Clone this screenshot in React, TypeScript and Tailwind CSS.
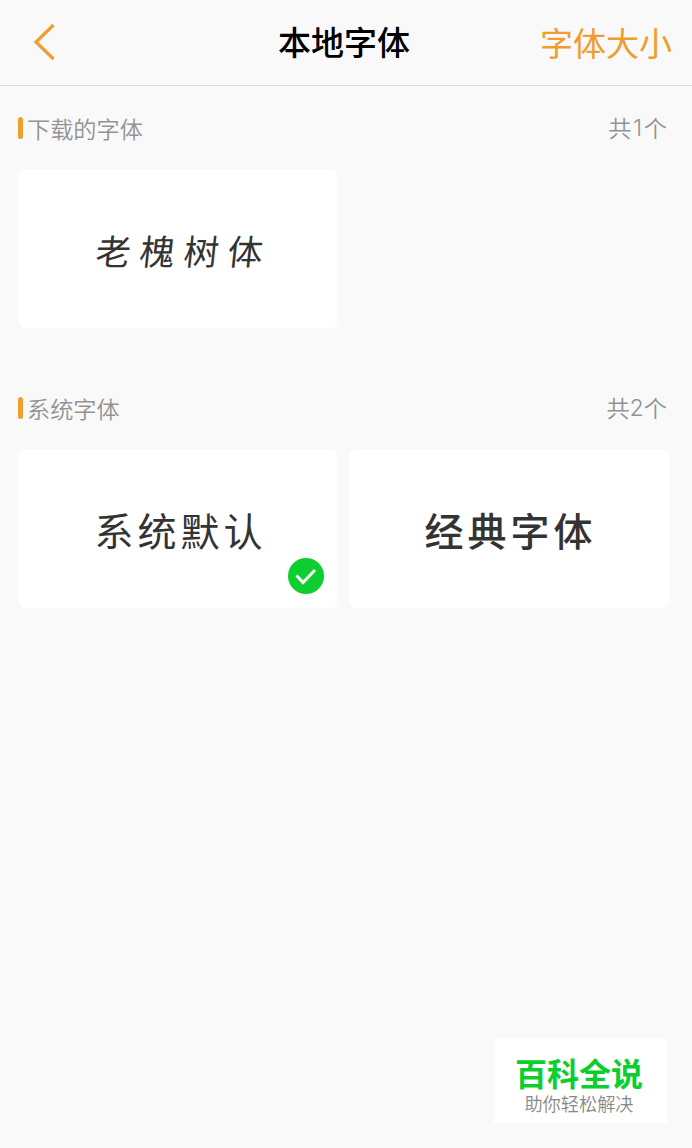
import React from "react";

function SectionHead({ title, total }: { title: string; total: number }) {
  return (
    <div className="flex h-[30px] items-center justify-between pl-[18px] pr-[25px] text-[23.200px] font-[350] leading-[28px] text-[#939393]">
      <div className="flex items-center gap-1">
        <span className="h-[22px] w-[5px] rounded-sm bg-[#ef9d2d]" />
        <span className="-mt-px">{title}</span>
      </div>
      <span className="-mt-[2px] flex">
        共
        <span className="mt-px min-w-[12.500px] text-center font-['Inter',sans-serif]">{total}</span>
        个
      </span>
    </div>
  );
}

export default function App() {
  return (
    <div className="relative flex h-[1148px] w-[692px] flex-col overflow-hidden bg-[#f9f9f9] font-['Noto_Sans_CJK_SC',sans-serif]">
      <header className="grid h-[86px] grid-cols-[1fr_132px_1fr] items-center border-b border-[#dcdcdc] pr-5 pl-4">
        <svg className="mb-[2px] ml-[16px] h-[38px] w-[24px]" viewBox="0 0 24 38" fill="none" stroke="#ef9d2d" strokeWidth="3.200">
          <path d="M21.500 2L4 19L21.500 36" />
        </svg>
        <h1 className="mb-[3px] text-center text-[33px] font-medium leading-[48px] whitespace-nowrap text-black">本地字体</h1>
        <button className="mb-[2px] text-right text-[33px] leading-[48px] whitespace-nowrap text-[#ef9d2d]">字体大小</button>
      </header>
      <section className="pt-[27px]">
        <SectionHead title="下载的字体" total={1} />
        <div className="mt-[26px] ml-[18px] flex h-[159px] w-[320px] items-center justify-center rounded-lg bg-white">
          <span className="mt-[3px] ml-[12px] -skew-x-6 text-[35px] tracking-[9px] text-[#333]">老槐树体</span>
        </div>
      </section>
      <section className="pt-[65px]">
        <SectionHead title="系统字体" total={2} />
        <div className="mt-[26px] flex gap-[11px] px-[18px]">
          <div className="relative flex h-[159px] w-[320px] items-center justify-center rounded-lg bg-white">
            <span className="mt-px ml-[5px] text-[39px] tracking-[4px] text-[#333]">系统默认</span>
            <svg className="absolute right-[14px] bottom-[14px] h-9 w-9" viewBox="0 0 36 36" fill="none">
              <circle cx="18" cy="18" r="18" fill="#0cce2f" />
              <path d="M8.500 17.500L15 24.500L27 12" stroke="white" strokeWidth="3" />
            </svg>
          </div>
          <div className="flex h-[159px] w-[320px] items-center justify-center rounded-lg bg-white">
            <span className="mt-px ml-[3px] text-[39px] font-medium tracking-[4px] text-[#333]">经典字体</span>
          </div>
        </div>
      </section>
      <aside className="absolute top-[1038px] left-[494px] flex h-[85px] w-[173px] flex-col items-center bg-white pr-[3px]">
        <strong className="mt-[15px] text-[32px] font-bold leading-[38px] text-[#0cce2f]">百科全说</strong>
        <span className="mt-[2px] text-[18.200px] font-[350] leading-[20px] text-[#888]">助你轻松解决</span>
      </aside>
    </div>
  );
}
